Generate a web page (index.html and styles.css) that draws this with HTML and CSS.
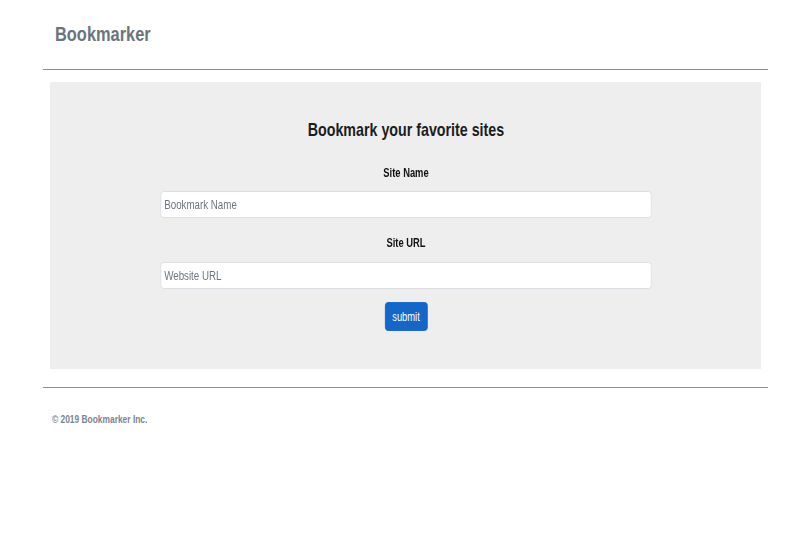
FILE: index.html
```html
<!DOCTYPE html>
<html>
<head>
<meta charset="utf-8">
<link rel="stylesheet" href="styles.css">
</head>
<body>
<div class="page">
  <header class="header">
    <h3 class="brand"><span class="narrow">Bookmarker</span></h3>
  </header>
  <div class="jumbo">
    <h2 class="title"><span class="narrow-c">Bookmark your favorite sites</span></h2>
    <form class="form">
      <label class="label">Site Name</label>
      <input class="input" type="text" placeholder="Bookmark Name">
      <label class="label label-url">Site URL</label>
      <input class="input" type="text" placeholder="Website URL">
      <button class="btn" type="button">submit</button>
    </form>
  </div>
  <footer class="footer">
    <p class="copy"><span class="narrow">© 2019 Bookmarker Inc.</span></p>
  </footer>
</div>
</body>
</html>
```
FILE: styles.css
```css
html, body {
  margin: 0;
  padding: 0;
  background: #fff;
}
body {
  font-family: "Liberation Sans", Arial, sans-serif;
}
.narrow {
  display: inline-block;
  transform: scaleX(0.8);
  transform-origin: left center;
  white-space: nowrap;
}
.narrow-c {
  display: inline-block;
  transform: scaleX(0.75);
  transform-origin: center center;
  white-space: nowrap;
}
.page {
  width: 725px;
  margin-left: 43px;
}
.header {
  padding: 22px 12px 0;
  height: 47px;
  border-bottom: 1px solid #8c8c8c;
}
.brand {
  margin: 0;
  font-size: 20.5px;
  line-height: 24px;
  font-weight: bold;
  color: #6c757d;
}
.jumbo {
  margin: 12px 7px 0;
  background: #eeeeee;
  height: 287px;
  box-sizing: border-box;
  padding-top: 36px;
}
.title {
  margin: 0;
  text-align: center;
  font-size: 19px;
  line-height: 24px;
  font-weight: bold;
  color: #1a1d21;
}
.form {
  width: 630px;
  margin: 24px auto 0;
  display: flex;
  flex-direction: column;
  align-items: center;
  transform: scaleX(0.78);
}
.label {
  font-size: 12px;
  line-height: 14px;
  font-weight: bold;
  color: #111;
  margin-bottom: 11px;
}
.label-url {
  margin-bottom: 12px;
}
.input {
  width: 100%;
  height: 27px;
  box-sizing: border-box;
  border: 1px solid #d6dade;
  border-radius: 4px;
  background: #fff;
  padding: 0 4px;
  font-family: inherit;
  font-size: 12.5px;
  color: #495057;
  margin-bottom: 18px;
}
.input::placeholder {
  color: #6c757d;
}
.btn {
  margin-top: -5px;
  width: 55px;
  height: 29px;
  border: 1px solid #1263c6;
  border-radius: 4px;
  background: #1466c8;
  color: #fff;
  font-family: inherit;
  font-size: 12px;
  padding: 0;
}
.footer {
  margin-top: 18px;
  border-top: 1px solid #8c8c8c;
  padding: 25px 9px 0;
}
.copy {
  margin: 0;
  font-size: 10.5px;
  line-height: 13px;
  font-weight: bold;
  color: #7b8590;
}
```
